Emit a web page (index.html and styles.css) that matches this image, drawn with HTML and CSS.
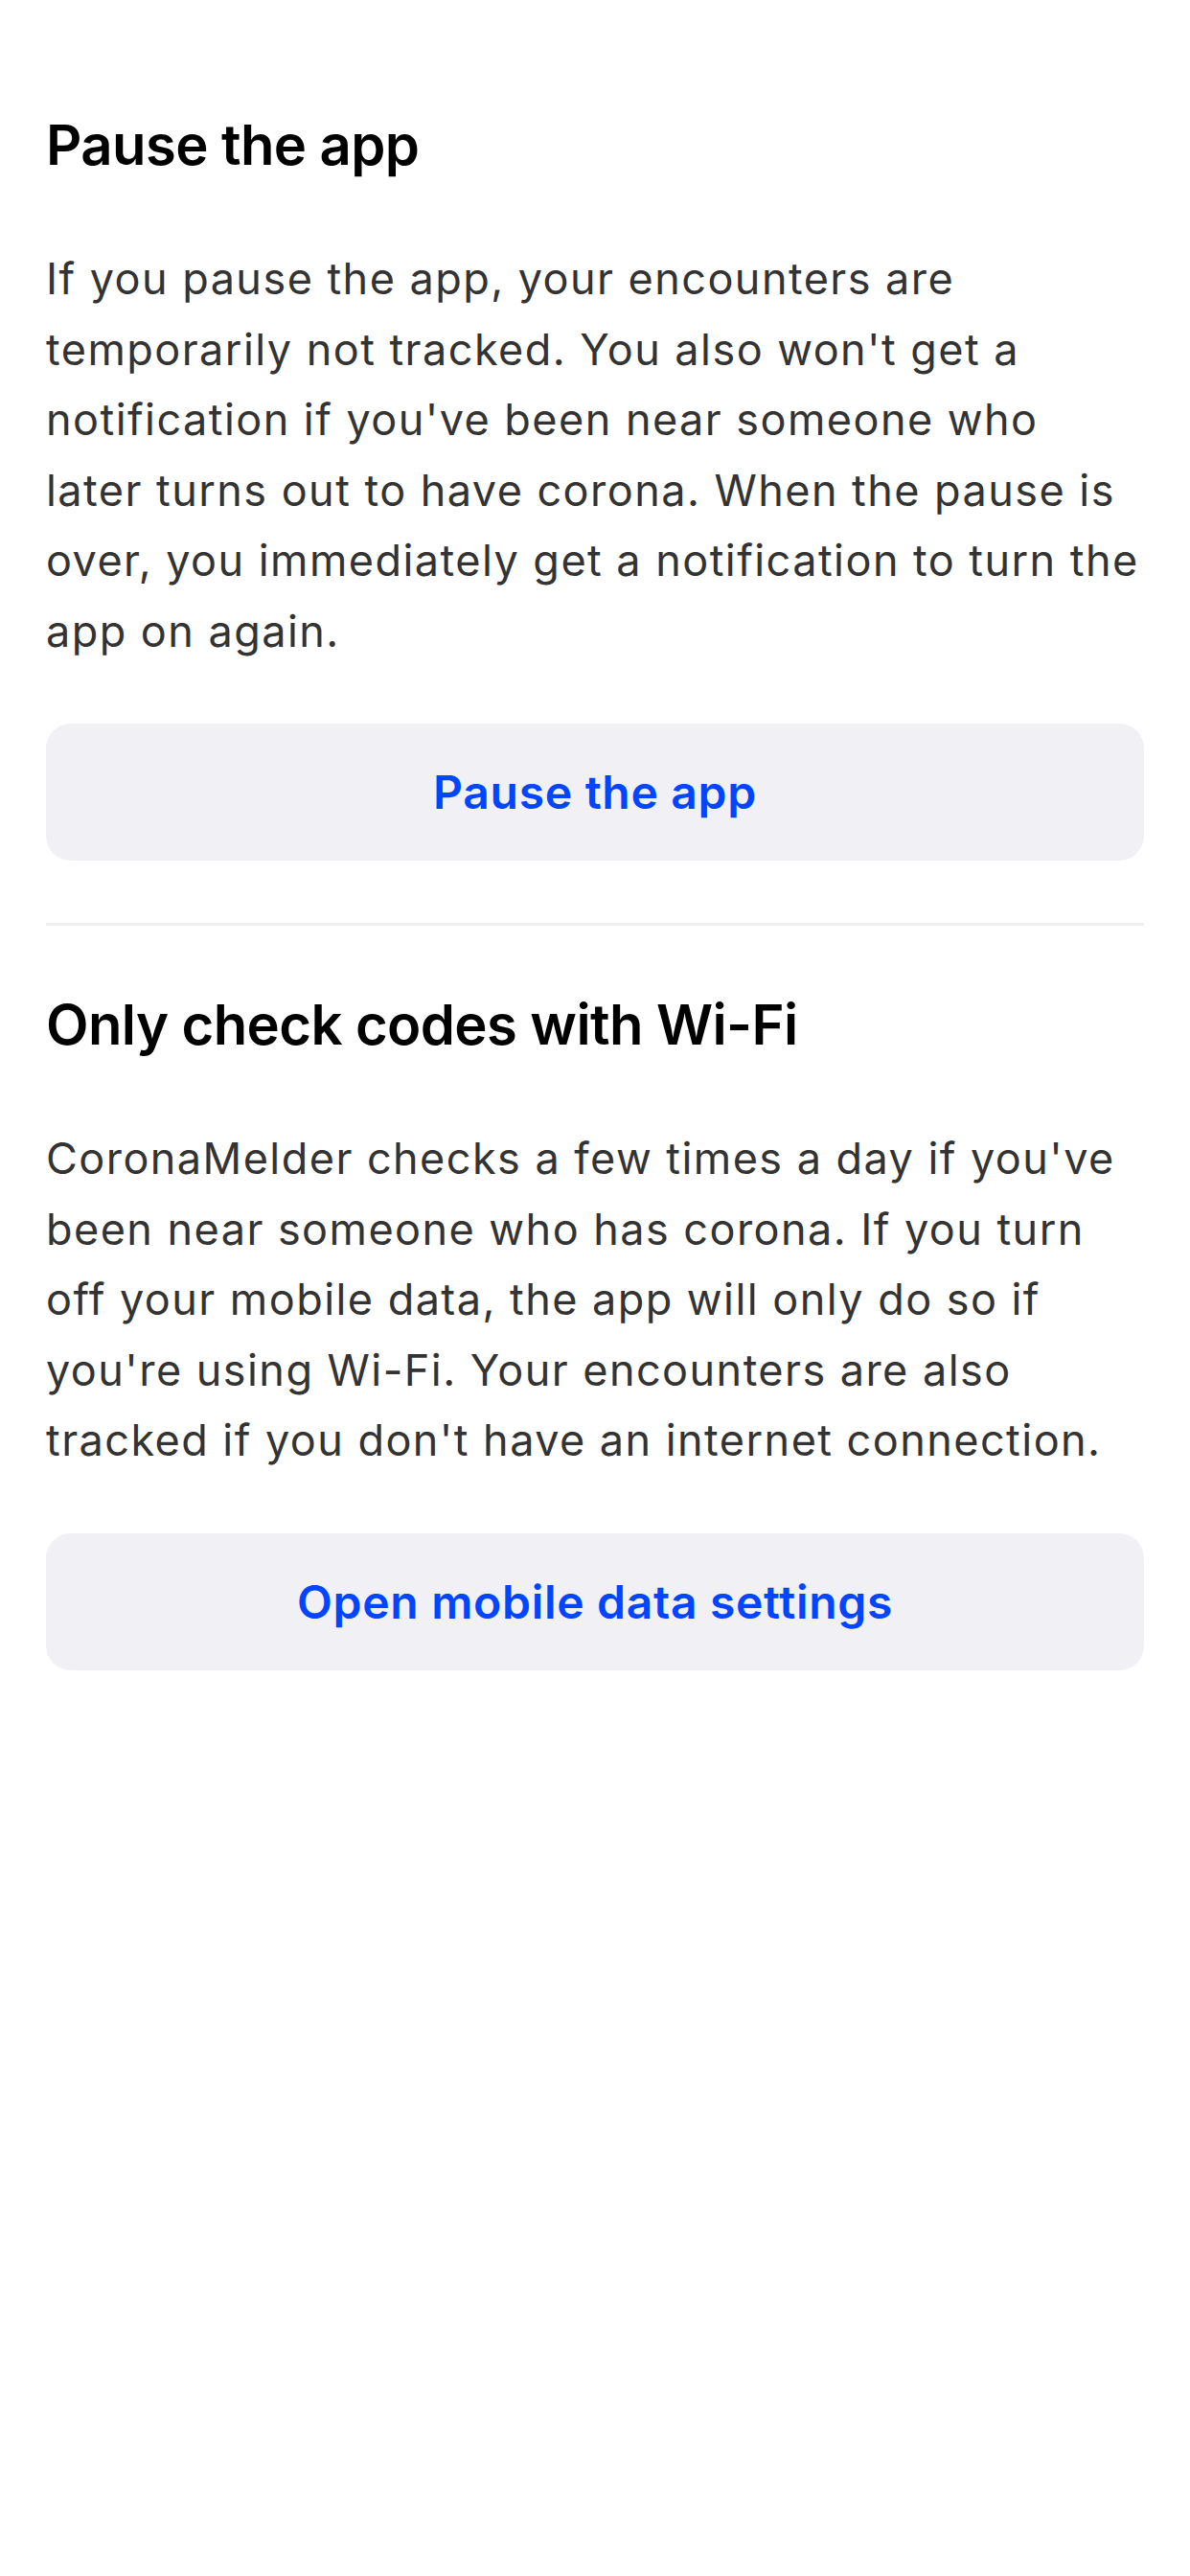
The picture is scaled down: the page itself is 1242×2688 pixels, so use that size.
FILE: index.html
```html
<!DOCTYPE html>
<html lang="en">
<head>
<meta charset="utf-8">
<title>Settings</title>
<link rel="stylesheet" href="styles.css">
</head>
<body>
<main class="page">
  <section class="block block-first">
    <h2 class="title">Pause the app</h2>
    <p class="text">If you pause the app, your encounters are temporarily not tracked. You also won't get a notification if you've been near someone who later turns out to have corona. When the pause is over, you immediately get a notification to turn the app on again.</p>
    <button class="action" type="button">Pause the app</button>
  </section>
  <hr class="divider">
  <section class="block">
    <h2 class="title">Only check codes with Wi-Fi</h2>
    <p class="text">CoronaMelder checks a few times a day if you've been near someone who has corona. If you turn off your mobile data, the app will only do so if you're using Wi-Fi. Your encounters are also tracked if you don't have an internet connection.</p>
    <button class="action" type="button">Open mobile data settings</button>
  </section>
</main>
</body>
</html>
```

FILE: styles.css
```css
html, body {
  margin: 0;
  padding: 0;
  background: #ffffff;
}

body {
  font-family: Inter, "Noto Sans", "Liberation Sans", sans-serif;
  -webkit-font-smoothing: antialiased;
}

.page {
  padding: 0 48px;
  display: flex;
  flex-direction: column;
}

.block {
  display: flex;
  flex-direction: column;
  padding-top: 68px;
}

.block-first {
  padding-top: 116px;
}

.title {
  margin: 0;
  font-size: 58px;
  line-height: 70px;
  font-weight: 600;
  color: #000000;
  letter-spacing: -0.6px;
}

.text {
  margin: 68px 0 0 0;
  font-size: 45px;
  line-height: 73.5px;
  font-weight: 400;
  color: #333333;
  letter-spacing: 1.45px;
}

.action {
  margin-top: 60px;
  height: 143px;
  width: 100%;
  border: none;
  border-radius: 26px;
  background: #f0f0f5;
  color: #0045ff;
  font-family: inherit;
  font-size: 48px;
  font-weight: 600;
  letter-spacing: 0.7px;
  padding: 0;
}

.divider {
  margin: 65px 0 0 0;
  border: none;
  height: 3px;
  background: #eeeeef;
}
```
